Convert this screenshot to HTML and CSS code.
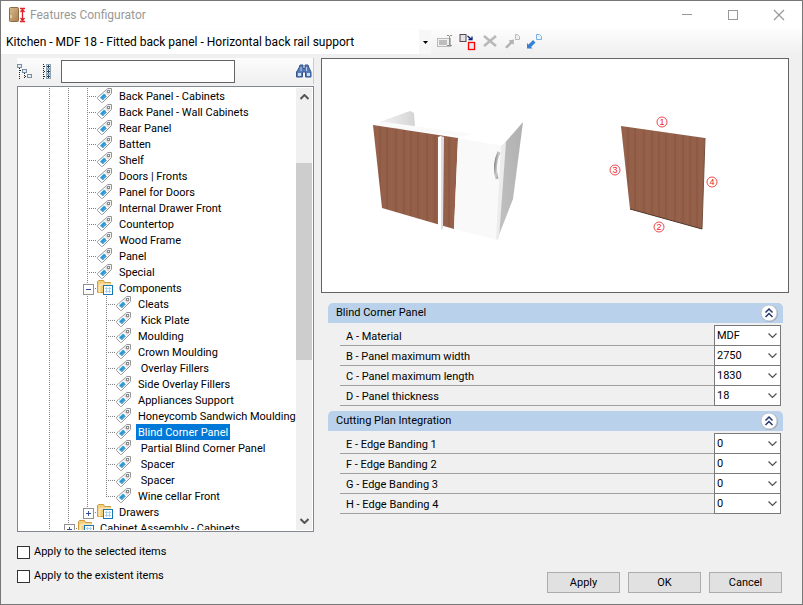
FILE: index.html
```html
<!DOCTYPE html>
<html lang="en">
<head>
<meta charset="utf-8">
<title>Features Configurator</title>
<link rel="stylesheet" href="styles.css">
</head>
<body>
<svg class="defs" aria-hidden="true">
  <defs>
    <pattern id="wood" width="31" height="240" patternUnits="userSpaceOnUse">
      <rect width="31" height="240" fill="#94604a"/>
      <path d="M3 0v240M12 0v240M20 0v240M27 0v240" stroke="#8e5a43" stroke-width="2"/>
      <path d="M7 0v240M16 0v240M24 0v240" stroke="#98644c"/>
    </pattern>
    <linearGradient id="side" x1="0" x2="1" y1="1" y2="0"><stop offset="0" stop-color="#c2c2c2"/><stop offset="1" stop-color="#b0b0b0"/></linearGradient>
    <linearGradient id="back" x1="0" x2="1"><stop offset="0" stop-color="#f4f4f4"/><stop offset="1" stop-color="#d4d4d4"/></linearGradient>
    <linearGradient id="handle" x1="0" x2="1" y2="1"><stop offset="0" stop-color="#777"/><stop offset=".5" stop-color="#ccc"/><stop offset="1" stop-color="#888"/></linearGradient>
    <linearGradient id="door" x1="0" x2="1" y2="1"><stop offset="0" stop-color="#d8b98c"/><stop offset="1" stop-color="#a9824f"/></linearGradient>
    <symbol id="tag" viewBox="0 0 16 16">
      <path d="M.5 9.500 9.500 1.500 10.500.5H14.500V5.500L5.500 14.500H4.500L.5 10.500z" fill="#fff" stroke="#969696"/>
      <path d="M8 3.500 10.500 1.500H13.500V5L11 7.500z" fill="#dadada"/>
      <path d="M3 9.500 7 5.500 9.500 8 5.500 12z" fill="#3ba6e2"/>
      <path d="M4 10.500 8 6.500M5.500 12 9.500 8" stroke="#1b78b8" stroke-width=".8"/>
      <rect x="10.500" y="2.500" width="2" height="2" fill="#fff" stroke="#8c8c8c"/>
    </symbol>
    <symbol id="folder" viewBox="0 0 16 16">
      <path d="M.5 12.500V1.500L1.500.5h5l1 2H13.500v10z" fill="#f4ce79" stroke="#d19a3a"/>
      <path d="M2.500 12.500V5.500L4 4.500h10" fill="none" stroke="#fbe6b3" stroke-width="2"/>
      <rect x="6.500" y="5.500" width="9" height="9" fill="#fff" stroke="#1878b4"/>
      <path d="M8 8.500h6M8 11.500h6M9.500 7v6M12.500 7v6" stroke="#a5d3ec"/>
    </symbol>
    <symbol id="chev" viewBox="0 0 9 6"><path d="M.5.5 4.500 4.500 8.500.5" fill="none" stroke="#505050" stroke-width="1.2"/></symbol>
    <symbol id="collapse" viewBox="0 0 20 20">
      <circle cx="10.500" cy="10.500" r="8.500" fill="#9b9fa8"/>
      <circle cx="10" cy="10" r="8" fill="#fff" stroke="#c3cad4"/>
      <path d="M6.500 9.500 10 6 13.500 9.500M6.500 14 10 10.500 13.500 14" fill="none" stroke="#23376e" stroke-width="1.5"/>
    </symbol>
  </defs>
</svg>
<div class="window">
  <header class="titlebar">
    <svg width="17" height="16" viewBox="0 0 17 16" aria-hidden="true">
      <rect x=".5" y=".5" width="9" height="14" rx="1" fill="url(#door)" stroke="#8e6b45"/>
      <path d="M2 8v3" stroke="#fff3dc"/>
      <path d="M11 1.500h5M11 14.500h5M13.500 2v12M11.500 5 13.500 2.500 15.500 5M11.500 11 13.500 13.500 15.500 11" fill="none" stroke="#e0202c" stroke-width="1.300"/>
    </svg>
    <h1>Features Configurator</h1>
    <button class="cap" aria-label="Minimize"><svg width="12" height="12"><path d="M1 5.500h10" stroke="#999"/></svg></button>
    <button class="cap" aria-label="Maximize"><svg width="12" height="12"><rect x="1.500" y="1.500" width="9" height="9" fill="none" stroke="#999"/></svg></button>
    <button class="cap" aria-label="Close"><svg width="12" height="12"><path d="M1 1 11 11M11 1 1 11" stroke="#999" stroke-width="1.200"/></svg></button>
  </header>

  <div class="toolbar">
    <div class="combo">
      <select aria-label="Configuration"><option>Kitchen - MDF 18 - Fitted back panel - Horizontal back rail support</option></select>
      <span class="combo-arrow"><svg width="5" height="3"><path d="M0 0h5L2.500 3z"/></svg></span>
    </div>
    <button aria-label="Rename"><svg width="16" height="16"><rect x=".5" y="4.500" width="13" height="8" fill="#f0f0f0" stroke="#b9b9b9"/><rect x="2" y="6" width="8" height="5" fill="#bdbdbd"/><path d="M10 1.500h2M13 1.500h2M12.500 2v9M10 11.500h5" stroke="#909090"/></svg></button>
    <button aria-label="Duplicate"><svg width="17" height="17"><rect x="1" y=".5" width="6" height="7" fill="#dfe3ea" stroke="#5c4448"/><rect x="9.500" y="8.500" width="6" height="7" fill="#e4eaf0" stroke="#f00" stroke-width="1.300"/><path d="M8.500 2 12 5M13 2.500V5.500H9.500" fill="none" stroke="#0a2278" stroke-width="1.300"/></svg></button>
    <button aria-label="Delete"><svg width="16" height="16"><path d="M2 2 14 12M14 2 2 12" stroke="#b9b9b9" stroke-width="2.500"/></svg></button>
    <button aria-label="Import"><svg width="16" height="16"><path d="M1 13 6 8 4.500 6.500 10 5.500 9.500 11 8 9.500 3 14.500z" fill="#b2b2b2"/><path d="M11.500.5h2l2 2v3h-4z" fill="#eee" stroke="#bbb"/></svg></button>
    <button aria-label="Export"><svg width="16" height="16"><path d="M1 14.500V9L2.500 10.500 7 6 9.500 8.500 5 13 6.500 14.500z" fill="#3a80d2"/><path d="M10.500.5h3l2 2v3h-5z" fill="#eaf4ff" stroke="#7eaee6"/></svg></button>
  </div>

  <main>
    <section class="left">
      <div class="tree-tools">
        <button aria-label="Collapse all"><svg width="16" height="17"><path d="M2.500 5v11M7.500 10v6M3 7.500h4M8 13.500h3" stroke="#222" stroke-dasharray="1 1"/><g fill="#e8eef5" stroke="#7890a4"><rect x=".5" y="1.500" width="4" height="3"/><rect x="5.500" y="6.500" width="4" height="3"/><rect x="10.500" y="11.500" width="4" height="3"/></g></svg></button>
        <button aria-label="Expand all"><svg width="16" height="17"><path d="M4.500 1v15M5 3.500h3M5 8.500h3M5 13.500h3" stroke="#222" stroke-dasharray="1 1"/><g fill="#e8eef5" stroke="#8fa3b3"><rect x="7.500" y="1.500" width="4" height="4"/><rect x="7.500" y="6.500" width="4" height="4"/><rect x="7.500" y="11.500" width="4" height="4"/></g><path d="M8 3.500h3M8 8.500h3M8 13.500h3M9.500 2v3M9.500 7v3M9.500 12v3" stroke="#264056"/></svg></button>
        <input type="text" aria-label="Search">
        <button aria-label="Find"><svg width="16" height="14"><path d="M3 4 4 1h3v3l1 1 1-1V1h3l1 3 2 4v5H9.500V8h-3v5H.5V8z" fill="#5578b6" stroke="#35558f"/><path d="M2 9h3v3H2zM11 9h3v3h-3z" fill="#cddcf5"/><path d="M5 3v4M10.500 3v4" stroke="#b7cdf0"/></svg></button>
      </div>

      <div class="treebox">
        <div class="tree">
          <ul class="root"><li><ul>
            <li><ul>
              <li><span class="node"><svg><use href="#tag"/></svg><b>Back Panel - Cabinets</b></span></li>
              <li><span class="node"><svg><use href="#tag"/></svg><b>Back Panel - Wall Cabinets</b></span></li>
              <li><span class="node"><svg><use href="#tag"/></svg><b>Rear Panel</b></span></li>
              <li><span class="node"><svg><use href="#tag"/></svg><b>Batten</b></span></li>
              <li><span class="node"><svg><use href="#tag"/></svg><b>Shelf</b></span></li>
              <li><span class="node"><svg><use href="#tag"/></svg><b>Doors | Fronts</b></span></li>
              <li><span class="node"><svg><use href="#tag"/></svg><b>Panel for Doors</b></span></li>
              <li><span class="node"><svg><use href="#tag"/></svg><b>Internal Drawer Front</b></span></li>
              <li><span class="node"><svg><use href="#tag"/></svg><b>Countertop</b></span></li>
              <li><span class="node"><svg><use href="#tag"/></svg><b>Wood Frame</b></span></li>
              <li><span class="node"><svg><use href="#tag"/></svg><b>Panel</b></span></li>
              <li><span class="node"><svg><use href="#tag"/></svg><b>Special</b></span></li>
              <li><span class="node branch open"><svg><use href="#folder"/></svg><b>Components</b></span>
                <ul>
                  <li><span class="node"><svg><use href="#tag"/></svg><b>Cleats</b></span></li>
                  <li><span class="node"><svg><use href="#tag"/></svg><b>&nbsp;Kick Plate</b></span></li>
                  <li><span class="node"><svg><use href="#tag"/></svg><b>Moulding</b></span></li>
                  <li><span class="node"><svg><use href="#tag"/></svg><b>Crown Moulding</b></span></li>
                  <li><span class="node"><svg><use href="#tag"/></svg><b>&nbsp;Overlay Fillers</b></span></li>
                  <li><span class="node"><svg><use href="#tag"/></svg><b>Side Overlay Fillers</b></span></li>
                  <li><span class="node"><svg><use href="#tag"/></svg><b>Appliances Support</b></span></li>
                  <li><span class="node"><svg><use href="#tag"/></svg><b>Honeycomb Sandwich Moulding</b></span></li>
                  <li><span class="node"><svg><use href="#tag"/></svg><b class="selected">Blind Corner Panel</b></span></li>
                  <li><span class="node"><svg><use href="#tag"/></svg><b>&nbsp;Partial Blind Corner Panel</b></span></li>
                  <li><span class="node"><svg><use href="#tag"/></svg><b>&nbsp;Spacer</b></span></li>
                  <li><span class="node"><svg><use href="#tag"/></svg><b>&nbsp;Spacer</b></span></li>
                  <li class="last"><span class="node"><svg><use href="#tag"/></svg><b>Wine cellar Front</b></span></li>
                </ul>
              </li>
              <li class="last"><span class="node branch"><svg><use href="#folder"/></svg><b>Drawers</b></span></li>
            </ul></li>
            <li><span class="node branch"><svg><use href="#folder"/></svg><b>Cabinet Assembly - Cabinets</b></span></li>
          </ul></li></ul>
        </div>
        <div class="scrollbar">
          <svg width="9" height="6" viewBox="0 0 9 6"><path d="M.5 5 4.500 1 8.500 5" fill="none" stroke="#555" stroke-width="2"/></svg>
          <div class="track"><div class="thumb"></div></div>
          <svg width="9" height="6" viewBox="0 0 9 6"><path d="M.5 1 4.500 5 8.500 1" fill="none" stroke="#555" stroke-width="2"/></svg>
        </div>
      </div>
      <label class="check"><input type="checkbox">Apply to the selected items</label>
      <label class="check"><input type="checkbox">Apply to the existent items</label>
    </section>

    <section class="right">
      <div class="preview">
        <svg viewBox="0 0 466 233" role="img" aria-label="Blind corner panel preview">
          <path d="M57 63 88 52l4 2 1 15-20 2z" fill="url(#back)"/>
          <path d="M51 66 62 63 160 76 179 77 179 82 142 78z" fill="#fafafa"/>
          <path d="M51 66 136 79 132 170 60 149z" fill="url(#wood)"/>
          <path d="M136 78 179 82 201 67" fill="#fff"/>
          <path d="M136 79 181 87 175 181 132 170z" fill="#f9f9fa"/>
          <path d="M181 86 201 63 191 140 175 181z" fill="url(#side)"/>
          <path d="M179 87 184 83 177 179 174 181z" fill="#ececec"/>
          <path d="M116 78 119 77 119 171 116 170z" fill="#fff"/>
          <path d="M119 77 122 78 121 169 119 171z" fill="#dedee2"/>
          <path d="M177 93Q171 106 175 120" fill="none" stroke="url(#handle)" stroke-width="3"/>
          <path d="M299 67 383 79 380 170 308 150z" fill="url(#wood)"/>
          <path d="M383 79 380 170" stroke="#735040"/>
          <path d="M308 150 380 170" stroke="#4f3529"/>
          <g fill="#fff" stroke="#ee4a4a"><circle cx="340" cy="63" r="5"/><circle cx="337" cy="168" r="5"/><circle cx="293" cy="111" r="5"/><circle cx="390" cy="123" r="5"/></g>
          <g class="mark"><text x="340" y="66">1</text><text x="337" y="171">2</text><text x="293" y="114">3</text><text x="390" y="126">4</text></g>
        </svg>
      </div>

      <section class="group">
        <h2>Blind Corner Panel<button aria-label="Collapse Blind Corner Panel"><svg width="20" height="20"><use href="#collapse"/></svg></button></h2>
        <div class="field"><label for="a">A - Material</label><span class="pick"><select id="a"><option>MDF</option></select><svg><use href="#chev"/></svg></span></div>
        <div class="field"><label for="b">B - Panel maximum width</label><span class="pick"><select id="b"><option>2750</option></select><svg><use href="#chev"/></svg></span></div>
        <div class="field"><label for="c">C - Panel maximum length</label><span class="pick"><select id="c"><option>1830</option></select><svg><use href="#chev"/></svg></span></div>
        <div class="field"><label for="d">D - Panel thickness</label><span class="pick"><select id="d"><option>18</option></select><svg><use href="#chev"/></svg></span></div>
      </section>
      <section class="group">
        <h2>Cutting Plan Integration<button aria-label="Collapse Cutting Plan Integration"><svg width="20" height="20"><use href="#collapse"/></svg></button></h2>
        <div class="field"><label for="e">E - Edge Banding 1</label><span class="pick"><select id="e"><option>0</option></select><svg><use href="#chev"/></svg></span></div>
        <div class="field"><label for="f">F - Edge Banding 2</label><span class="pick"><select id="f"><option>0</option></select><svg><use href="#chev"/></svg></span></div>
        <div class="field"><label for="g">G - Edge Banding 3</label><span class="pick"><select id="g"><option>0</option></select><svg><use href="#chev"/></svg></span></div>
        <div class="field"><label for="h">H - Edge Banding 4</label><span class="pick"><select id="h"><option>0</option></select><svg><use href="#chev"/></svg></span></div>
      </section>
      <div class="actions"><button>Apply</button><button>OK</button><button>Cancel</button></div>
    </section>
  </main>
</div>
</body>
</html>
```
FILE: styles.css
```css
* { box-sizing: border-box; }
body { margin: 0; font: 11px/16px Roboto, "Liberation Sans", sans-serif; color: #000; }
button, select, input { font: inherit; color: inherit; margin: 0; }
button { padding: 0; border: 0; background: none; }
svg { display: block; flex: none; }
.defs { position: absolute; width: 0; height: 0; }
h1, h2 { margin: 0; font-weight: 400; }

.window { height: 100vh; display: flex; flex-direction: column; border: 1px solid #777; background: #f0f0f0; }

.titlebar { display: flex; align-items: center; height: 28px; padding-left: 8px; background: #fff; }
.titlebar h1 { flex: 1; margin-left: 4px; font-size: 12px; color: #999; }
.cap { width: 46px; height: 28px; display: grid; place-items: center; }

.toolbar { display: flex; align-items: center; gap: 6px; height: 26px; padding-right: 8px; background: linear-gradient(#fdfdfd, #efefef); }
.combo { display: flex; width: 430px; height: 24px; background: #fff; }
.combo select { flex: 1; min-width: 0; padding: 0 5px; border: 0; background: none; appearance: none; font-size: 12px; }
.combo-arrow { width: 12px; display: grid; place-items: center; background: #f7f7f7; }

main { flex: 1; min-height: 0; display: grid; grid-template-columns: 297px 1fr; gap: 7px; padding: 3px 13px 11px 16px; }
.left, .right { display: flex; flex-direction: column; min-width: 0; min-height: 0; }

.tree-tools { display: flex; align-items: center; gap: 6px; height: 26px; margin-bottom: 2px; border-right: 1px solid #ccc; background: linear-gradient(#fcfcfc, #f0f0f0); }
.tree-tools input { width: 174px; height: 23px; border: 1px solid #646464; background: #fff; }
.tree-tools button:last-child { margin: 0 1px 0 auto; }

.treebox { flex: 1; min-height: 0; display: flex; margin-bottom: 12px; padding: 1px 1px 1px 0; border: 1px solid #828790; background: #fff; }
.tree { flex: 1; min-width: 0; height: 100%; overflow: hidden; white-space: nowrap; }
.tree ul { list-style: none; margin: 0; padding: 0 0 0 19px; }
.tree .root { padding-left: 22px; }
.tree li { background: repeating-linear-gradient(#808080 0 1px, transparent 1px 2px) 9px 0 / 1px 100% no-repeat; }
.tree li.last { background-size: 1px 8px; }
.node { position: relative; display: flex; align-items: center; height: 16px; padding-left: 19px; }
.node::before { content: ""; position: absolute; left: 9px; top: 8px; width: 10px; height: 1px; background: repeating-linear-gradient(90deg, #808080 0 1px, transparent 1px 2px); }
.node svg { position: relative; width: 16px; height: 16px; }
.node b { height: 16px; margin-left: 4px; padding: 0 2px; font-weight: 400; line-height: 17px; }
.node .selected { background: #0078d7; color: #fff; }
.branch::after { content: ""; position: absolute; left: 5px; top: 4px; width: 9px; height: 9px; border: 1px solid #919191;
  background: linear-gradient(#2f4fa2, #2f4fa2) center / 5px 1px no-repeat, linear-gradient(#2f4fa2, #2f4fa2) center / 1px 5px no-repeat, #fff; }
.branch.open::after { background: linear-gradient(#2f4fa2, #2f4fa2) center / 5px 1px no-repeat, #fff; }

.scrollbar { display: flex; flex-direction: column; align-items: center; width: 16px; padding: 6px 0; background: #f0f0f0; }
.track { flex: 1; align-self: stretch; margin: 4px 0; padding-top: 59px; }
.thumb { height: 56%; background: #cdcdcd; }

.check { display: flex; align-items: center; gap: 4px; height: 16px; margin-bottom: 8px; }
.check + .check { margin-bottom: 9px; }
.check input { appearance: none; width: 13px; height: 13px; border: 1px solid #333; background: #fff; }

.preview { height: 235px; margin-bottom: 10px; border: 1px solid #646464; background: #fff; }
.preview svg { width: 100%; height: 100%; }
.mark { font: 9px "Liberation Sans", sans-serif; fill: #e22; text-anchor: middle; }

.group { margin: 0 6px 5px 7px; }
.group h2 { display: flex; align-items: center; justify-content: space-between; height: 20px; margin-bottom: 3px; padding: 0 4px 0 8px; border-radius: 5px 5px 0 0; background: #b9d1ea; font-size: 11px; }
.field { display: grid; grid-template-columns: 1fr 67px; height: 20px; margin: 0 2px 0 12px; border-bottom: 1px solid #a0a0a0; }
.field label { padding: 3px 6px 0; }
.pick { position: relative; height: 21px; margin-top: -1px; }
.pick select { display: block; width: 100%; height: 21px; padding: 0 2px; border: 1px solid #7a7a7a; border-radius: 0; background: #fff; appearance: none; }
.pick svg { position: absolute; right: 4px; top: 8px; width: 9px; height: 6px; pointer-events: none; }

.actions { display: flex; justify-content: flex-end; gap: 8px; margin: auto 7px 0 0; }
.actions button { width: 73px; height: 21px; border: 1px solid #adadad; background: #e1e1e1; }
```
